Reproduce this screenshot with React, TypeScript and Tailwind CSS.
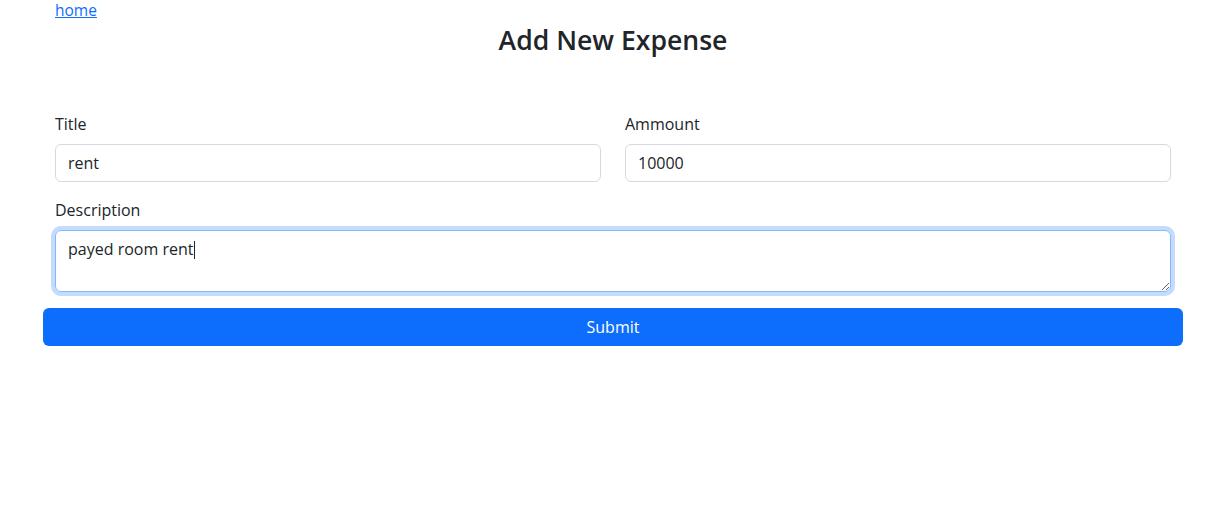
import React from "react";

export default function App() {
  return (
    <div
      className="min-h-[531px] bg-white text-[#212529]"
      style={{ fontFamily: '"Segoe UI", "Open Sans", sans-serif' }}
    >
      <div className="w-[1140px] px-3" style={{ marginLeft: 43 }}>
        <a href="#" className="block w-fit text-[15.5px] leading-5 mb-1 text-[#0d6efd] underline">
          home
        </a>
        <h3 className="text-center text-[26.6px] font-semibold leading-[33px] mb-[55px]">
          Add New Expense
        </h3>
        <form>
          <div className="grid grid-cols-2 gap-x-6 mb-4">
            <div>
              <label className="block text-[16px] leading-6 mb-2">Title</label>
              <input
                readOnly
                defaultValue="rent"
                className="block w-full h-[38px] rounded-[6px] border border-[#d6dae0] px-3 text-[16px] leading-6 text-[#212529] outline-none"
              />
            </div>
            <div>
              <label className="block text-[16px] leading-6 mb-2">Ammount</label>
              <input
                readOnly
                defaultValue="10000"
                className="block w-full h-[38px] rounded-[6px] border border-[#d6dae0] px-3 text-[16px] leading-6 text-[#212529] outline-none"
              />
            </div>
          </div>
          <div className="mb-4">
            <label className="block text-[16px] leading-6 mb-2">Description</label>
            <div className="relative">
              <textarea
                readOnly
                rows={2}
                defaultValue="payed room rent"
                className="block w-full h-[62px] rounded-[6px] border border-[#86b7fe] px-3 py-[6px] text-[16px] leading-6 text-[#212529] outline-none shadow-[0_0_0_4px_rgba(13,110,253,0.25)]"
              />
              <span className="absolute left-[139px] top-[11px] h-[18px] w-px bg-[#212529]" />
            </div>
          </div>
        </form>
      </div>
      <div className="w-[1140px]" style={{ marginLeft: 43 }}>
        <button className="block w-full h-[38px] rounded-[6px] bg-[#0d6efd] text-white text-[16px] leading-6">
          Submit
        </button>
      </div>
    </div>
  );
}
